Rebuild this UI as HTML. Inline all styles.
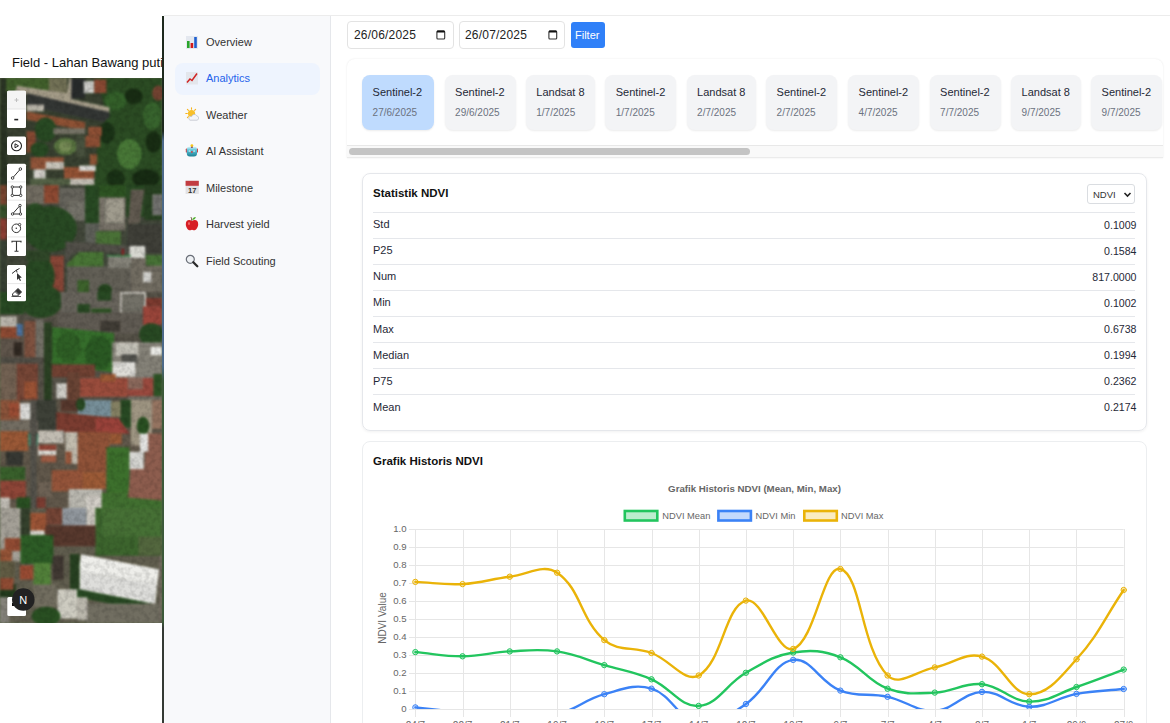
<!DOCTYPE html>
<html><head><meta charset="utf-8">
<style>
*{box-sizing:border-box;margin:0;padding:0}
html,body{width:1170px;height:723px;overflow:hidden;background:#fff;font-family:"Liberation Sans",sans-serif;position:relative}
.a{position:absolute}
.t{position:absolute;white-space:nowrap;line-height:1}
#map{left:0;top:78px;width:162px;height:545px;overflow:hidden;background:#5b6a4a}
#vline{left:162px;top:16px;width:2px;height:707px;background:linear-gradient(#1e2a1e 0,#1e2a1e 115px,#4d6a8a 125px,#4d6a8a 350px,#3d5a3a 365px,#3d5a3a 606px,#353b35 612px,#353b35 707px)}
#panel{left:164px;top:15px;width:1006px;height:708px;background:#fff;border-top:1px solid #ececec;box-shadow:0 1px 1px rgba(0,0,0,.03)}
#side{left:164px;top:16px;width:167px;height:707px;background:#f8f9fb;border-right:1px solid #e5e7eb}
.nav{font-size:11px;color:#333}
.card{position:absolute;border-radius:8px;background:#f3f4f6;box-shadow:0 1px 2px rgba(0,0,0,.08)}
.card .n{position:absolute;left:10.6px;top:12px;font-size:11px;color:#1f2937;line-height:1;white-space:nowrap}
.card .d{position:absolute;left:10.6px;top:33.3px;font-size:10px;color:#6b7280;line-height:1;white-space:nowrap}
.row{position:absolute;left:373px;width:762px;height:26px;border-top:1px solid #e5e7eb}
.row .l{position:absolute;left:0;top:6.8px;font-size:11px;color:#1f2937;line-height:1}
.row .v{position:absolute;right:-1.5px;top:7px;font-size:10.6px;color:#1f2937;line-height:1}
</style></head><body>
<div class="t" style="left:12px;top:56px;font-size:13px;color:#111">Field - Lahan Bawang putih</div>
<div id="map" class="a"><svg width="162" height="545" viewBox="0 0 162 545" style="position:absolute;left:0;top:0"><defs><filter id="bl" x="0" y="0" width="1" height="1" color-interpolation-filters="sRGB"><feGaussianBlur stdDeviation="0.9"/><feColorMatrix type="saturate" values="0.85"/><feComponentTransfer><feFuncR type="gamma" amplitude="1" exponent="1.3" offset="0"/><feFuncG type="gamma" amplitude="1" exponent="1.3" offset="0"/><feFuncB type="gamma" amplitude="1" exponent="1.3" offset="0"/></feComponentTransfer></filter><clipPath id="mc"><rect width="162" height="545"/></clipPath></defs><g filter="url(#bl)" clip-path="url(#mc)"><rect x="0.0" y="0.0" width="162.0" height="110.0" fill="#4f5a44"/><rect x="0.0" y="0.0" width="6.8" height="110.0" fill="#3f4d36"/><polygon points="97.4,0.0 162.0,0.0 162.0,110.0 94.3,110.0 97.4,68.5 106.5,38.0" fill="#3d6632"/><ellipse cx="129.3" cy="76.1" rx="12.2" ry="15.2" fill="#5a9045"/><ellipse cx="106.5" cy="54.8" rx="8.4" ry="10.6" fill="#2a4a24"/><ellipse cx="146.0" cy="100.4" rx="13.7" ry="9.1" fill="#26421f"/><ellipse cx="115.6" cy="100.4" rx="9.1" ry="9.1" fill="#2a4a22"/><ellipse cx="153.6" cy="63.9" rx="7.6" ry="10.6" fill="#27441f"/><ellipse cx="133.9" cy="18.3" rx="9.1" ry="7.6" fill="#27441f"/><ellipse cx="152.1" cy="38.0" rx="9.1" ry="13.7" fill="#4a7e3c"/><ellipse cx="115.6" cy="22.8" rx="10.6" ry="9.1" fill="#447a38"/><rect x="6.1" y="0.0" width="60.8" height="13.7" fill="#567a3a"/><rect x="48.7" y="0.0" width="18.3" height="15.2" fill="#8a886a"/><polygon points="16.7,7.6 66.9,15.2 69.2,0.0 75.3,0.0 72.3,21.3 109.5,28.9 109.5,35.7 15.2,14.5" fill="#b6ae9a"/><polygon points="26.6,15.2 109.5,34.2 109.5,39.5 103.4,44.1 26.6,28.1" fill="#4b4e4c"/><rect x="71.5" y="0.0" width="13.7" height="20.5" fill="#3e4242"/><rect x="83.7" y="3.0" width="10.6" height="12.2" fill="#d6d6d2"/><rect x="94.3" y="1.5" width="12.2" height="13.7" fill="#a65f43"/><polygon points="26.6,33.5 85.2,44.1 85.2,52.5 26.6,41.8" fill="#aa6845"/><rect x="26.6" y="26.6" width="17.5" height="6.8" fill="#c9c4b8"/><rect x="88.2" y="48.7" width="13.7" height="9.1" fill="#ac6746"/><rect x="85.2" y="57.8" width="15.2" height="11.4" fill="#a86545"/><rect x="26.6" y="53.2" width="9.1" height="21.3" fill="#a46043"/><ellipse cx="45.6" cy="51.7" rx="10.6" ry="12.2" fill="#3a6432"/><ellipse cx="39.5" cy="71.5" rx="9.1" ry="7.6" fill="#3a6432"/><ellipse cx="65.4" cy="68.5" rx="11.4" ry="8.8" fill="#6f8e52"/><ellipse cx="65.4" cy="68.5" rx="6.8" ry="5.3" fill="#8aa066"/><rect x="53.2" y="50.2" width="31.9" height="6.1" fill="#8d8a7c"/><rect x="76.1" y="57.8" width="9.1" height="21.3" fill="#5f6a52"/><rect x="30.4" y="79.1" width="33.5" height="12.2" fill="#ac6b4a"/><rect x="63.9" y="89.0" width="30.4" height="12.2" fill="#af6845"/><rect x="33.5" y="91.3" width="12.2" height="9.9" fill="#dcdad4"/><rect x="79.1" y="87.5" width="16.7" height="5.6" fill="#e0dfda"/><rect x="45.6" y="83.7" width="18.3" height="7.6" fill="#d2cfc6"/><rect x="70.0" y="100.4" width="24.3" height="9.6" fill="#cfcac0"/><rect x="30.4" y="100.4" width="39.5" height="9.6" fill="#6a7a5a"/><rect x="89.7" y="76.1" width="7.6" height="10.6" fill="#a86b46"/><ellipse cx="158.2" cy="15.2" rx="6.1" ry="7.6" fill="#935b44"/><rect x="0.0" y="107.0" width="162.0" height="110.0" fill="#5a6050"/><rect x="0.0" y="107.0" width="6.8" height="19.8" fill="#955b41"/><rect x="0.0" y="126.8" width="6.8" height="13.7" fill="#4a6a3a"/><rect x="0.0" y="140.5" width="6.8" height="21.3" fill="#aa5345"/><rect x="0.0" y="161.8" width="6.8" height="55.2" fill="#4e5a48"/><rect x="25.9" y="107.0" width="33.5" height="19.0" fill="#8a8478"/><rect x="44.1" y="107.0" width="14.5" height="18.3" fill="#aa6043"/><rect x="59.3" y="110.0" width="30.4" height="32.7" fill="#7e7c73"/><rect x="68.5" y="123.7" width="16.7" height="19.0" fill="#8c8a80"/><ellipse cx="50.2" cy="151.1" rx="26.6" ry="22.8" fill="#3a6432"/><ellipse cx="35.0" cy="137.4" rx="10.6" ry="12.2" fill="#3a6432"/><rect x="85.2" y="107.0" width="13.7" height="41.1" fill="#3a6432"/><rect x="98.9" y="107.0" width="27.4" height="12.9" fill="#3f6e30"/><rect x="126.3" y="107.0" width="18.3" height="31.9" fill="#3a6432"/><rect x="144.5" y="107.0" width="17.5" height="35.0" fill="#3a5a30"/><polygon points="130.8,111.6 144.5,111.6 139.9,145.0 127.8,146.5" fill="#7a7266"/><rect x="152.1" y="116.1" width="9.9" height="21.3" fill="#8a8a86"/><rect x="98.9" y="119.2" width="26.6" height="33.5" fill="#8f8a7e"/><rect x="105.7" y="120.7" width="18.3" height="23.6" fill="#b3aea0"/><rect x="85.2" y="145.0" width="13.7" height="19.8" fill="#767870"/><rect x="95.8" y="153.4" width="25.1" height="16.7" fill="#5e8a46"/><polygon points="65.4,163.3 130.8,167.8 130.8,175.5 106.5,173.9 91.3,172.4 71.5,175.5 65.4,186.1" fill="#6a6860"/><rect x="127.8" y="146.5" width="34.2" height="28.1" fill="#57574f"/><rect x="129.3" y="167.8" width="16.0" height="16.7" fill="#dfdfd9"/><polygon points="66.9,186.1 79.1,173.9 103.4,173.9 103.4,192.2 66.9,192.2" fill="#5c8e44"/><rect x="48.7" y="177.7" width="15.2" height="35.7" fill="#a55c49"/><ellipse cx="39.5" cy="198.3" rx="15.2" ry="19.8" fill="#3a6432"/><rect x="25.9" y="172.4" width="24.3" height="10.6" fill="#43603a"/><rect x="66.9" y="188.4" width="95.1" height="28.6" fill="#7b786e"/><rect x="108.0" y="177.7" width="22.1" height="12.2" fill="#9a988e"/><rect x="106.5" y="177.0" width="24.3" height="1.5" fill="#4a9a5a"/><rect x="77.6" y="202.1" width="11.4" height="14.9" fill="#4f7c3a"/><ellipse cx="105.0" cy="212.0" rx="6.8" ry="6.1" fill="#355e2c"/><rect x="130.8" y="180.0" width="31.2" height="37.0" fill="#8a8478"/><rect x="143.0" y="193.7" width="8.4" height="10.6" fill="#d8d8d4"/><rect x="146.0" y="177.0" width="16.0" height="10.6" fill="#5a8a45"/><rect x="121.7" y="170.9" width="2.3" height="6.1" fill="#b43535"/><rect x="0.0" y="214.0" width="162.0" height="110.0" fill="#6f6a5e"/><ellipse cx="41.1" cy="223.1" rx="21.3" ry="16.7" fill="#3a6432"/><rect x="0.0" y="214.0" width="24.3" height="22.1" fill="#3a6432"/><rect x="60.8" y="214.0" width="60.8" height="20.5" fill="#807c72"/><rect x="77.6" y="226.2" width="12.2" height="10.6" fill="#3a6432"/><rect x="91.3" y="230.7" width="19.8" height="9.1" fill="#3d6a30"/><rect x="97.4" y="214.0" width="13.7" height="8.4" fill="#3a6432"/><rect x="120.2" y="214.0" width="25.9" height="31.2" fill="#e2e0da"/><rect x="121.7" y="215.5" width="22.8" height="27.4" fill="#8a887e"/><rect x="146.0" y="220.1" width="16.0" height="8.4" fill="#9b5042"/><rect x="143.0" y="228.5" width="19.0" height="18.3" fill="#b85b4d"/><rect x="57.8" y="234.5" width="85.2" height="21.3" fill="#7a746a"/><rect x="100.4" y="242.9" width="19.8" height="10.6" fill="#5a544c"/><ellipse cx="151.4" cy="256.6" rx="12.2" ry="11.4" fill="#3a6432"/><polygon points="51.7,249.0 114.1,255.1 114.1,294.6 51.7,287.0" fill="#468838"/><ellipse cx="68.5" cy="268.8" rx="12.2" ry="15.2" fill="#3f7a32"/><ellipse cx="98.9" cy="274.8" rx="13.7" ry="16.7" fill="#3a7530"/><rect x="111.8" y="264.2" width="50.2" height="38.0" fill="#9a978d"/><rect x="115.6" y="264.2" width="22.8" height="13.7" fill="#cfcdc4"/><rect x="121.7" y="276.4" width="15.2" height="9.1" fill="#6a6a64"/><rect x="112.6" y="284.0" width="22.8" height="14.5" fill="#e6e5e0"/><rect x="150.6" y="268.8" width="11.4" height="8.4" fill="#eeeeea"/><rect x="0.0" y="238.3" width="16.7" height="10.6" fill="#c7c2b8"/><rect x="0.0" y="249.0" width="20.5" height="11.4" fill="#ab6144"/><rect x="16.7" y="245.9" width="6.1" height="12.2" fill="#5f8ab8"/><rect x="24.3" y="242.9" width="11.4" height="39.5" fill="#9a6954"/><rect x="35.7" y="241.4" width="8.4" height="42.6" fill="#8a877d"/><rect x="0.0" y="260.4" width="22.8" height="19.0" fill="#7a6e62"/><rect x="13.7" y="264.2" width="8.4" height="13.7" fill="#4a4036"/><rect x="0.0" y="279.4" width="44.1" height="6.1" fill="#6a665c"/><rect x="44.1" y="244.4" width="7.6" height="79.6" fill="#3e5a34"/><rect x="51.7" y="286.3" width="43.4" height="12.9" fill="#905946"/><rect x="79.9" y="299.9" width="47.9" height="19.0" fill="#b7624f"/><rect x="127.8" y="299.9" width="25.9" height="18.3" fill="#b75f51"/><rect x="127.8" y="299.9" width="15.2" height="11.4" fill="#a48072"/><rect x="66.9" y="293.9" width="12.9" height="30.1" fill="#855b48"/><rect x="0.0" y="285.5" width="16.7" height="38.5" fill="#8c7a68"/><rect x="16.7" y="285.5" width="21.3" height="38.5" fill="#945d4a"/><rect x="24.3" y="303.7" width="12.2" height="16.7" fill="#b76945"/><rect x="100.4" y="296.1" width="15.2" height="7.6" fill="#b77146"/><rect x="153.6" y="296.1" width="8.4" height="27.8" fill="#3f6e34"/><rect x="56.3" y="305.3" width="10.6" height="15.2" fill="#d8d6d0"/><rect x="127.8" y="318.2" width="34.2" height="5.8" fill="#8a8478"/><rect x="0.0" y="322.0" width="162.0" height="110.0" fill="#7a7060"/><rect x="0.0" y="322.0" width="19.8" height="20.5" fill="#a76b4d"/><rect x="9.1" y="325.0" width="9.9" height="13.7" fill="#b66244"/><rect x="19.8" y="325.0" width="15.2" height="16.7" fill="#e2e2de"/><rect x="35.0" y="322.0" width="21.3" height="30.4" fill="#55594e"/><rect x="77.6" y="322.0" width="34.2" height="16.7" fill="#8aa4ae"/><rect x="60.8" y="322.0" width="16.7" height="11.4" fill="#754f41"/><ellipse cx="80.6" cy="326.6" rx="4.6" ry="6.1" fill="#3a6432"/><rect x="120.2" y="322.0" width="13.7" height="27.4" fill="#3a6432"/><rect x="111.0" y="323.5" width="9.9" height="15.2" fill="#9a9676"/><rect x="130.8" y="322.0" width="21.3" height="45.6" fill="#b2a995"/><ellipse cx="143.0" cy="347.9" rx="6.1" ry="9.1" fill="#3a6a30"/><rect x="152.1" y="322.0" width="9.9" height="28.9" fill="#ac8a75"/><polygon points="56.3,334.2 118.6,340.3 129.3,355.5 56.3,353.9" fill="#9a5242"/><polygon points="95.8,340.3 118.6,340.3 129.3,355.5 95.8,355.5" fill="#b8584d"/><rect x="77.6" y="353.9" width="31.9" height="39.5" fill="#ac6949"/><rect x="82.1" y="393.5" width="24.3" height="17.5" fill="#b77146"/><rect x="109.5" y="355.5" width="12.2" height="10.6" fill="#b77146"/><rect x="65.4" y="353.9" width="12.2" height="31.9" fill="#cfc9bc"/><rect x="65.4" y="373.7" width="6.1" height="12.2" fill="#b06b4b"/><rect x="0.0" y="342.5" width="38.0" height="10.6" fill="#8b8478"/><rect x="0.0" y="353.2" width="28.1" height="19.8" fill="#b66f46"/><rect x="28.1" y="355.5" width="9.9" height="12.2" fill="#5aa080"/><rect x="38.0" y="352.4" width="25.9" height="12.9" fill="#cec9bf"/><rect x="38.0" y="366.9" width="18.3" height="10.6" fill="#e4e1da"/><rect x="38.8" y="366.9" width="17.5" height="5.3" fill="#af5c4a"/><rect x="41.1" y="377.5" width="15.2" height="6.8" fill="#b87155"/><rect x="6.1" y="373.7" width="16.7" height="13.7" fill="#4e4f48"/><rect x="0.0" y="388.9" width="25.1" height="13.7" fill="#4b7a3a"/><rect x="0.0" y="402.6" width="25.9" height="18.3" fill="#ac5c4a"/><rect x="0.0" y="419.4" width="9.9" height="12.6" fill="#d0ccc4"/><rect x="16.7" y="419.4" width="15.2" height="12.6" fill="#3a6a30"/><rect x="38.0" y="404.1" width="13.7" height="15.2" fill="#857a6a"/><rect x="51.7" y="392.0" width="31.2" height="21.3" fill="#b06b4b"/><rect x="68.5" y="411.0" width="33.5" height="21.0" fill="#c8c6be"/><rect x="35.0" y="419.4" width="10.6" height="12.6" fill="#985244"/><rect x="106.5" y="369.2" width="22.8" height="62.8" fill="#4e8a3a"/><rect x="101.9" y="414.8" width="60.1" height="17.2" fill="#558a3e"/><polygon points="130.8,355.5 162.0,355.5 162.0,422.4 127.8,419.4 130.8,390.5 144.5,390.5 146.0,355.5" fill="#a87563"/><rect x="129.3" y="373.7" width="14.5" height="17.5" fill="#dfdfdb"/><rect x="139.9" y="355.5" width="8.4" height="18.3" fill="#ececea"/><rect x="30.4" y="322.0" width="6.1" height="110.0" fill="#6c6a62"/><rect x="85.9" y="419.4" width="15.1" height="12.6" fill="#dcd9d2"/><rect x="0.0" y="430.0" width="162.0" height="115.1" fill="#7a7664"/><rect x="0.0" y="430.0" width="20.7" height="53.3" fill="#b6b2a8"/><rect x="4.8" y="460.2" width="15.9" height="12.7" fill="#af6244"/><rect x="0.0" y="471.4" width="11.9" height="11.9" fill="#b26b48"/><rect x="20.7" y="430.0" width="9.5" height="27.1" fill="#4a5a40"/><rect x="30.2" y="434.8" width="17.5" height="19.1" fill="#b76b46"/><rect x="30.2" y="452.3" width="14.3" height="7.2" fill="#e0ddd6"/><rect x="46.1" y="430.0" width="15.9" height="16.7" fill="#925b49"/><rect x="62.1" y="430.0" width="24.7" height="21.5" fill="#a4aab0"/><rect x="86.7" y="430.0" width="14.3" height="22.3" fill="#d8d4cc"/><rect x="45.4" y="447.5" width="51.7" height="20.7" fill="#754f41"/><rect x="20.7" y="457.1" width="32.6" height="28.6" fill="#3e7834"/><rect x="33.4" y="484.9" width="17.5" height="22.3" fill="#669a48"/><rect x="19.9" y="487.3" width="13.5" height="14.3" fill="#b66244"/><rect x="95.5" y="430.0" width="66.5" height="47.7" fill="#4f7f3c"/><rect x="101.8" y="430.0" width="60.2" height="28.6" fill="#5a8a45"/><rect x="138.4" y="458.6" width="23.6" height="19.1" fill="#6a8050"/><polygon points="81.2,476.1 159.1,491.3 155.2,526.3 74.8,510.4" fill="#f2f2ee"/><polygon points="79.6,492.9 157.5,504.8 155.2,526.3 74.8,510.4" fill="#e6e6e2"/><polygon points="74.8,510.4 155.2,526.3 151.2,533.4 76.4,519.1" fill="#3a6432"/><rect x="85.9" y="525.5" width="76.1" height="19.6" fill="#8a8678"/><rect x="70.0" y="476.1" width="9.5" height="35.0" fill="#3a5a30"/><rect x="57.3" y="511.2" width="19.9" height="29.4" fill="#d8d6cc"/><rect x="77.2" y="519.1" width="10.3" height="23.1" fill="#c8c5bb"/><ellipse cx="46.1" cy="538.2" rx="14.3" ry="9.5" fill="#3a6a30"/><rect x="0.0" y="506.4" width="15.9" height="12.7" fill="#35552c"/><rect x="33.4" y="506.4" width="23.9" height="22.3" fill="#8a8576"/><rect x="0.0" y="519.1" width="9.5" height="25.9" fill="#9a9890"/><rect x="0.0" y="483.3" width="14.3" height="19.9" fill="#7a7458"/><rect x="0.0" y="500.0" width="13.5" height="11.9" fill="#ac6245"/><rect x="52.5" y="477.7" width="11.1" height="23.9" fill="#5a5048"/><rect x="159.1" y="477.7" width="2.9" height="67.3" fill="#8a8276"/></g><filter id="nz" x="0" y="0" width="1" height="1"><feTurbulence type="fractalNoise" baseFrequency="0.2" numOctaves="2" seed="3"/><feColorMatrix type="matrix" values="0 0 0 0 0  0 0 0 0 0  0 0 0 0 0  0 0 0 -1.6 1.0"/></filter><rect width="162" height="545" filter="url(#nz)" opacity="0.18"/></svg></div>
<div id="vline" class="a"></div>
<div id="panel" class="a"></div>
<div id="side" class="a"></div>
<div class="a" style="left:175px;top:63px;width:145px;height:32px;border-radius:8px;background:#eef4fe"></div>
<div class="t nav" style="left:206px;top:37px">Overview</div>
<div class="t nav" style="left:206px;top:73px;color:#2563eb">Analytics</div>
<div class="t nav" style="left:206px;top:110px">Weather</div>
<div class="t nav" style="left:206px;top:146px">AI Assistant</div>
<div class="t nav" style="left:206px;top:183px">Milestone</div>
<div class="t nav" style="left:206px;top:219px">Harvest yield</div>
<div class="t nav" style="left:206px;top:256px">Field Scouting</div>

<!-- date filter -->
<div class="a" style="left:347px;top:21px;width:107px;height:28px;border:1px solid #e3e3e3;border-radius:4px"></div>
<div class="t" style="left:354px;top:29px;font-size:12px;letter-spacing:0.2px;color:#222">26/06/2025</div>
<div class="a" style="left:458.5px;top:21px;width:106.5px;height:28px;border:1px solid #e3e3e3;border-radius:4px"></div>
<div class="t" style="left:465px;top:29px;font-size:12px;letter-spacing:0.2px;color:#222">26/07/2025</div>
<div class="a" style="left:571px;top:22px;width:34px;height:26px;border-radius:3px;background:#2f80f8"></div>
<div class="t" style="left:575px;top:30px;font-size:11px;color:#fff">Filter</div>

<!-- carousel -->
<div class="a" style="left:347px;top:59px;width:816px;height:99px;background:#fff;border-radius:8px 8px 0 0;box-shadow:0 0 2px rgba(0,0,0,.10)"></div>
<div class="a" style="left:347px;top:145px;width:816px;height:13px;background:#f9f9f9;border-top:1px solid #e8e8e8;border-bottom:1px solid #ebebeb"></div>
<div class="a" style="left:349px;top:148px;width:401px;height:7px;background:#c4c4c4;border-radius:4px"></div>

<!-- stats card -->
<div class="a" style="left:362px;top:173px;width:785px;height:257.5px;border:1px solid #e5e7eb;border-radius:8px;box-shadow:0 1px 3px rgba(0,0,0,.06)"></div>
<div class="t" style="left:373px;top:188px;font-size:11.5px;font-weight:700;color:#111">Statistik NDVI</div>

<!-- chart card -->
<div class="a" style="left:362px;top:441px;width:785px;height:300px;border:1px solid #eceef0;border-radius:8px"></div>
<div class="t" style="left:373px;top:456px;font-size:11.5px;font-weight:700;color:#111">Grafik Historis NDVI</div>
<div class="card" style="left:362.0px;top:75px;width:72.0px;height:55px;background:#bfdbfe;"><div class="n">Sentinel-2</div><div class="d">27/6/2025</div></div>
<div class="card" style="left:444.5px;top:75px;width:71.0px;height:55px;"><div class="n">Sentinel-2</div><div class="d">29/6/2025</div></div>
<div class="card" style="left:525.7px;top:75px;width:69.0px;height:55px;"><div class="n">Landsat 8</div><div class="d">1/7/2025</div></div>
<div class="card" style="left:605.2px;top:75px;width:71.0px;height:55px;"><div class="n">Sentinel-2</div><div class="d">1/7/2025</div></div>
<div class="card" style="left:686.5px;top:75px;width:69.5px;height:55px;"><div class="n">Landsat 8</div><div class="d">2/7/2025</div></div>
<div class="card" style="left:766.0px;top:75px;width:71.0px;height:55px;"><div class="n">Sentinel-2</div><div class="d">2/7/2025</div></div>
<div class="card" style="left:848.0px;top:75px;width:71.0px;height:55px;"><div class="n">Sentinel-2</div><div class="d">4/7/2025</div></div>
<div class="card" style="left:929.5px;top:75px;width:71.0px;height:55px;"><div class="n">Sentinel-2</div><div class="d">7/7/2025</div></div>
<div class="card" style="left:1011.0px;top:75px;width:70.0px;height:55px;"><div class="n">Landsat 8</div><div class="d">9/7/2025</div></div>
<div class="card" style="left:1091.0px;top:75px;width:71.0px;height:55px;"><div class="n">Sentinel-2</div><div class="d">9/7/2025</div></div>
<div class="row" style="top:211.5px"><div class="l">Std</div><div class="v">0.1009</div></div>
<div class="row" style="top:237.6px"><div class="l">P25</div><div class="v">0.1584</div></div>
<div class="row" style="top:263.6px"><div class="l">Num</div><div class="v">817.0000</div></div>
<div class="row" style="top:289.7px"><div class="l">Min</div><div class="v">0.1002</div></div>
<div class="row" style="top:315.8px"><div class="l">Max</div><div class="v">0.6738</div></div>
<div class="row" style="top:341.9px"><div class="l">Median</div><div class="v">0.1994</div></div>
<div class="row" style="top:367.9px"><div class="l">P75</div><div class="v">0.2362</div></div>
<div class="row" style="top:394.0px"><div class="l">Mean</div><div class="v">0.2174</div></div>
<div class="a" style="left:1087px;top:184px;width:48px;height:19.8px;border:1px solid #dadde1;border-radius:3px"></div>
<div class="t" style="left:1093px;top:189.5px;font-size:9.5px;color:#333">NDVI</div>
<svg class="a" style="left:1123px;top:190.5px" width="9" height="7"><path d="M1.5 2 L4.5 5 L7.5 2" stroke="#222" stroke-width="1.6" fill="none"/></svg>
<svg class="a" style="left:0;top:0" width="40" height="623"><rect x="7.0" y="90.8" width="19.0" height="37.2" rx="1.5" fill="#fff"/><rect x="7" y="90.8" width="19" height="18.2" rx="1.5" fill="#f4f4f4"/><path d="M7 109H26" stroke="#e4e4e4" stroke-width="1"/><path d="M14.5 100H18.5M16.5 98V102" stroke="#bbb" stroke-width="0.9"/><path d="M14.3 119.6H18.2" stroke="#222" stroke-width="1.6"/><rect x="7.0" y="136.5" width="19.0" height="18.5" rx="1.5" fill="#fff"/><circle cx="16.5" cy="145.8" r="5" fill="none" stroke="#222" stroke-width="1.1"/><path d="M15 143.8 L18.5 145.8 L15 147.8Z" fill="none" stroke="#222" stroke-width="1"/><rect x="7.0" y="163.7" width="19.0" height="92.3" rx="1.5" fill="#fff"/><path d="M7.5 181.9H25.5" stroke="#e0e0e0" stroke-width="0.8"/><path d="M7.5 200.2H25.5" stroke="#e0e0e0" stroke-width="0.8"/><path d="M7.5 218.5H25.5" stroke="#e0e0e0" stroke-width="0.8"/><path d="M7.5 236.9H25.5" stroke="#e0e0e0" stroke-width="0.8"/><path d="M13 177.5 L20 169.5" stroke="#333" stroke-width="1"/><circle cx="12.6" cy="178" r="1.3" fill="#fff" stroke="#333" stroke-width="0.9"/><circle cx="20.4" cy="169" r="1.3" fill="#fff" stroke="#333" stroke-width="0.9"/><rect x="12.3" y="187" width="8.4" height="8.4" fill="none" stroke="#333" stroke-width="1"/><circle cx="12.3" cy="187.0" r="1.2" fill="#fff" stroke="#333" stroke-width="0.9"/><circle cx="20.7" cy="187.0" r="1.2" fill="#fff" stroke="#333" stroke-width="0.9"/><circle cx="12.3" cy="195.4" r="1.2" fill="#fff" stroke="#333" stroke-width="0.9"/><circle cx="20.7" cy="195.4" r="1.2" fill="#fff" stroke="#333" stroke-width="0.9"/><path d="M12.5 214 L20.5 214 L20 205.5Z" fill="none" stroke="#333" stroke-width="1"/><circle cx="12.5" cy="214.0" r="1.2" fill="#fff" stroke="#333" stroke-width="0.9"/><circle cx="20.5" cy="214.0" r="1.2" fill="#fff" stroke="#333" stroke-width="0.9"/><circle cx="20.0" cy="205.5" r="1.2" fill="#fff" stroke="#333" stroke-width="0.9"/><circle cx="16.3" cy="228.3" r="4.3" fill="none" stroke="#333" stroke-width="1"/><circle cx="16.3" cy="228.3" r="0.8" fill="#333"/><circle cx="19.6" cy="224.6" r="1.2" fill="#fff" stroke="#333" stroke-width="0.9"/><path d="M12 242.5V241.3H21V242.5M16.5 241.3V251.3M14.5 251.3H18.5" fill="none" stroke="#333" stroke-width="1.1"/><rect x="7.0" y="265.0" width="19.0" height="36.3" rx="1.5" fill="#fff"/><path d="M7.5 283.6H25.5" stroke="#e0e0e0" stroke-width="0.8"/><path d="M12 273.5 L16.5 270 L19.5 268.5 M16.5 270 L17 272.5" stroke="#333" stroke-width="1" fill="none"/><path d="M17 273 L17 280 L18.6 278.4 L20 281 L21 280.4 L19.7 277.9 L21.8 277.6Z" fill="#333"/><path d="M12.5 294 L18 288.5 L21.5 292 L17.5 296 H12.8 Z M15 291.5 L18.7 295" fill="none" stroke="#333" stroke-width="1"/><path d="M18 288.5 L21.5 292 L19 294.5 L15.5 291Z" fill="#333"/><path d="M11.5 296.5H21" stroke="#333" stroke-width="0.8"/><rect x="7.3" y="597.0" width="18.7" height="19.0" rx="1.5" fill="#fff"/><rect x="12" y="603" width="3" height="3" fill="#111"/><circle cx="23.3" cy="599.5" r="11.3" fill="#222"/><text x="23.3" y="603.8" text-anchor="middle" font-family="Liberation Sans" font-size="11" fill="#fff">N</text></svg>
<svg class="a" style="left:185.0px;top:34.5px" width="14" height="14" viewBox="0 0 14 14"><rect x="1" y="1" width="12" height="13" fill="#e4e8ef"/><rect x="2" y="6" width="2.6" height="7" fill="#2aa52a"/><rect x="5.6" y="8" width="2.6" height="5" fill="#d11a1a"/><rect x="9.2" y="2" width="2.6" height="11" fill="#1f5fcf"/></svg>
<svg class="a" style="left:185.0px;top:70.5px" width="14" height="14" viewBox="0 0 14 14"><rect x="1" y="1" width="12" height="12.5" fill="#e3e6ec"/><path d="M2 11.5 L5 8 L7 9.5 L12 2.5" stroke="#d02424" stroke-width="1.5" fill="none"/></svg>
<svg class="a" style="left:185.0px;top:106.5px" width="14" height="14" viewBox="0 0 14 14"><g stroke="#f6b21a" stroke-width="1.1" stroke-linecap="round"><path d="M6.5 0.8V2.3M0.8 6.5H2.3M2.4 2.4L3.4 3.4M10.6 2.4L9.6 3.4M2.4 10.6L3.4 9.6"/></g><circle cx="6.5" cy="6.5" r="3.6" fill="#f8c02a"/><path d="M5 13.2 H12 A2.2 2.2 0 0 0 11.8 8.9 A2.8 2.8 0 0 0 6.6 9.6 A1.8 1.8 0 0 0 5 13.2Z" fill="#f4f5f8" stroke="#b9bec8" stroke-width="0.7"/></svg>
<svg class="a" style="left:185.0px;top:143.5px" width="14" height="14" viewBox="0 0 14 14"><defs><linearGradient id="rg" x1="0" y1="0" x2="0" y2="1"><stop offset="0" stop-color="#e4f6f6"/><stop offset="0.35" stop-color="#5cc6dc"/><stop offset="1" stop-color="#1d7f92"/></linearGradient></defs><rect x="0.8" y="4.6" width="1.6" height="4" rx="0.7" fill="#c8454a"/><rect x="11.4" y="4.6" width="1.6" height="4" rx="0.7" fill="#c8454a"/><rect x="1.8" y="2.5" width="10.2" height="10" rx="3" fill="url(#rg)"/><circle cx="6.9" cy="3" r="1.1" fill="#7a3f7a"/><circle cx="6.9" cy="1.6" r="1.4" fill="#f5c518"/><ellipse cx="4.6" cy="7" rx="1.1" ry="0.6" fill="#fff"/><ellipse cx="9.2" cy="7" rx="1.1" ry="0.6" fill="#fff"/><circle cx="6.9" cy="8" r="0.9" fill="#d04040"/></svg>
<svg class="a" style="left:184.5px;top:180.0px" width="15" height="15" viewBox="0 0 15 15"><rect x="0.6" y="0.8" width="13.2" height="13.2" fill="#e2e2e4"/><rect x="0.6" y="0.8" width="13.2" height="5" fill="#c23c40"/><text x="7.2" y="12.8" text-anchor="middle" font-family="Liberation Sans" font-weight="700" font-size="7.5" fill="#333">17</text></svg>
<svg class="a" style="left:185.0px;top:215.8px" width="15" height="15" viewBox="0 0 15 15"><path d="M7 5 C4 3 0.6 4.3 0.8 8.4 C1 12 3.6 14.6 5.5 14.2 C6.2 14 6.5 13.8 7 13.8 C7.5 13.8 7.8 14 8.5 14.2 C10.4 14.6 13 12 13.2 8.4 C13.4 4.3 10 3 7 5Z" fill="#d71f26"/><path d="M6.8 4.8 C6.8 3.2 6.6 2 6 1.2" stroke="#5a3a1a" stroke-width="0.9" fill="none"/><path d="M7.2 4 C7.6 2 9.5 0.8 10.8 1 C10.5 2.8 9 4 7.2 4Z" fill="#4caf2a"/><ellipse cx="4" cy="7.6" rx="1" ry="1.5" fill="#f06a6a"/></svg>
<svg class="a" style="left:185.0px;top:253.5px" width="14" height="14" viewBox="0 0 14 14"><circle cx="5.3" cy="5.3" r="4" fill="#eef1f4" stroke="#6a6f78" stroke-width="1.2"/><path d="M8.3 8.3 L12.3 12.3" stroke="#2a2a2a" stroke-width="2.3" stroke-linecap="round"/></svg>
<svg class="a" style="left:435.5px;top:29px" width="10" height="11"><rect x="0.9" y="2" width="7.8" height="8" rx="1" fill="none" stroke="#333" stroke-width="1.1"/><rect x="0.9" y="1.6" width="7.8" height="2" rx="0.6" fill="#111"/></svg>
<svg class="a" style="left:547.5px;top:29px" width="10" height="11"><rect x="0.9" y="2" width="7.8" height="8" rx="1" fill="none" stroke="#333" stroke-width="1.1"/><rect x="0.9" y="1.6" width="7.8" height="2" rx="0.6" fill="#111"/></svg>
<svg class="a" style="left:0;top:0" width="1170" height="723" viewBox="0 0 1170 723">
<defs><clipPath id="pc"><rect x="411.4" y="525.0" width="716.3" height="184.0"/></clipPath></defs>
<path d="M409 709.5 H1123.7 M409 691.5 H1123.7 M409 673.5 H1123.7 M409 655.5 H1123.7 M409 637.5 H1123.7 M409 619.5 H1123.7 M409 601.5 H1123.7 M409 583.5 H1123.7 M409 565.5 H1123.7 M409 547.5 H1123.7 M409 529.5 H1123.7 M415.5 529.0 V717 M463.5 529.0 V717 M510.5 529.0 V717 M557.5 529.0 V717 M604.5 529.0 V717 M652.5 529.0 V717 M699.5 529.0 V717 M746.5 529.0 V717 M793.5 529.0 V717 M840.5 529.0 V717 M888.5 529.0 V717 M935.5 529.0 V717 M982.5 529.0 V717 M1029.5 529.0 V717 M1076.5 529.0 V717 M1124.5 529.0 V717" stroke="#e6e6e6" stroke-width="1" fill="none"/>
<g clip-path="url(#pc)" fill="none" stroke-width="2.4" stroke-linecap="round" stroke-linejoin="round">
<path d="M415.4 652.1 C434.3 653.8 443.7 656.4 462.6 656.3 C481.5 656.1 490.9 652.4 509.8 651.4 C528.7 650.4 538.6 648.7 557.1 651.4 C576.3 654.2 585.4 659.5 604.3 665.1 C623.2 670.7 633.5 671.5 651.5 679.3 C671.3 687.9 680.4 707.2 698.7 705.9 C718.2 704.6 726.0 684.1 745.9 672.8 C763.7 662.7 773.5 655.7 793.2 652.5 C811.3 649.5 823.2 650.7 840.4 657.3 C860.9 665.2 867.0 681.0 887.6 688.7 C904.8 695.1 916.0 693.5 934.8 692.6 C953.8 691.7 963.6 682.4 982.0 684.2 C1001.4 686.0 1010.2 701.0 1029.3 701.6 C1048.0 702.2 1057.8 693.4 1076.5 687.0 C1095.5 680.6 1104.8 676.6 1123.7 669.6" stroke="#22c55e"/>
<path d="M415.4 707.4 C434.3 709.5 443.7 710.5 462.6 712.6 C481.5 714.7 490.9 717.6 509.8 718.0 C528.7 718.4 538.9 719.0 557.1 714.4 C576.7 709.5 584.7 699.6 604.3 694.2 C622.4 689.3 634.6 683.4 651.5 688.7 C672.4 695.1 678.5 720.1 698.7 723.4 C716.3 726.2 729.3 715.2 745.9 704.0 C767.0 689.8 773.0 662.7 793.2 659.9 C810.8 657.4 819.9 682.6 840.4 690.6 C857.7 697.4 869.0 692.8 887.6 696.8 C906.8 700.9 916.2 711.8 934.8 710.8 C954.0 709.8 962.9 692.7 982.0 691.9 C1000.7 691.1 1010.3 706.4 1029.3 706.8 C1048.0 707.2 1057.3 697.5 1076.5 693.9 C1095.1 690.4 1104.8 691.0 1123.7 689.0" stroke="#3b82f6"/>
<path d="M415.4 581.9 C434.3 582.8 443.8 585.1 462.6 584.1 C481.6 583.0 490.9 579.0 509.8 576.7 C528.6 574.4 543.2 563.5 557.1 572.7 C581.0 588.8 580.6 619.9 604.3 640.1 C618.4 652.0 633.2 646.2 651.5 653.0 C671.0 660.3 684.7 683.3 698.7 675.5 C722.5 662.3 724.5 606.7 745.9 600.6 C762.3 596.0 777.3 654.2 793.2 648.9 C815.0 641.5 823.6 564.2 840.4 569.0 C861.4 574.9 860.8 647.6 887.6 675.5 C898.6 687.0 916.0 671.2 934.8 667.4 C953.8 663.6 965.2 651.8 982.0 656.6 C1003.0 662.6 1010.1 693.7 1029.3 694.2 C1047.9 694.8 1060.9 676.5 1076.5 659.3 C1098.7 634.8 1104.8 617.7 1123.7 590.0" stroke="#eab308"/>
<circle cx="415.4" cy="652.1" r="2.7" fill="rgba(34,197,94,.25)" stroke="#22c55e" stroke-width="1"/>
<circle cx="462.6" cy="656.3" r="2.7" fill="rgba(34,197,94,.25)" stroke="#22c55e" stroke-width="1"/>
<circle cx="509.8" cy="651.4" r="2.7" fill="rgba(34,197,94,.25)" stroke="#22c55e" stroke-width="1"/>
<circle cx="557.1" cy="651.4" r="2.7" fill="rgba(34,197,94,.25)" stroke="#22c55e" stroke-width="1"/>
<circle cx="604.3" cy="665.1" r="2.7" fill="rgba(34,197,94,.25)" stroke="#22c55e" stroke-width="1"/>
<circle cx="651.5" cy="679.3" r="2.7" fill="rgba(34,197,94,.25)" stroke="#22c55e" stroke-width="1"/>
<circle cx="698.7" cy="705.9" r="2.7" fill="rgba(34,197,94,.25)" stroke="#22c55e" stroke-width="1"/>
<circle cx="745.9" cy="672.8" r="2.7" fill="rgba(34,197,94,.25)" stroke="#22c55e" stroke-width="1"/>
<circle cx="793.2" cy="652.5" r="2.7" fill="rgba(34,197,94,.25)" stroke="#22c55e" stroke-width="1"/>
<circle cx="840.4" cy="657.3" r="2.7" fill="rgba(34,197,94,.25)" stroke="#22c55e" stroke-width="1"/>
<circle cx="887.6" cy="688.7" r="2.7" fill="rgba(34,197,94,.25)" stroke="#22c55e" stroke-width="1"/>
<circle cx="934.8" cy="692.6" r="2.7" fill="rgba(34,197,94,.25)" stroke="#22c55e" stroke-width="1"/>
<circle cx="982.0" cy="684.2" r="2.7" fill="rgba(34,197,94,.25)" stroke="#22c55e" stroke-width="1"/>
<circle cx="1029.3" cy="701.6" r="2.7" fill="rgba(34,197,94,.25)" stroke="#22c55e" stroke-width="1"/>
<circle cx="1076.5" cy="687.0" r="2.7" fill="rgba(34,197,94,.25)" stroke="#22c55e" stroke-width="1"/>
<circle cx="1123.7" cy="669.6" r="2.7" fill="rgba(34,197,94,.25)" stroke="#22c55e" stroke-width="1"/>
<circle cx="415.4" cy="707.4" r="2.7" fill="rgba(59,130,246,.25)" stroke="#3b82f6" stroke-width="1"/>
<circle cx="604.3" cy="694.2" r="2.7" fill="rgba(59,130,246,.25)" stroke="#3b82f6" stroke-width="1"/>
<circle cx="651.5" cy="688.7" r="2.7" fill="rgba(59,130,246,.25)" stroke="#3b82f6" stroke-width="1"/>
<circle cx="745.9" cy="704.0" r="2.7" fill="rgba(59,130,246,.25)" stroke="#3b82f6" stroke-width="1"/>
<circle cx="793.2" cy="659.9" r="2.7" fill="rgba(59,130,246,.25)" stroke="#3b82f6" stroke-width="1"/>
<circle cx="840.4" cy="690.6" r="2.7" fill="rgba(59,130,246,.25)" stroke="#3b82f6" stroke-width="1"/>
<circle cx="887.6" cy="696.8" r="2.7" fill="rgba(59,130,246,.25)" stroke="#3b82f6" stroke-width="1"/>
<circle cx="982.0" cy="691.9" r="2.7" fill="rgba(59,130,246,.25)" stroke="#3b82f6" stroke-width="1"/>
<circle cx="1029.3" cy="706.8" r="2.7" fill="rgba(59,130,246,.25)" stroke="#3b82f6" stroke-width="1"/>
<circle cx="1076.5" cy="693.9" r="2.7" fill="rgba(59,130,246,.25)" stroke="#3b82f6" stroke-width="1"/>
<circle cx="1123.7" cy="689.0" r="2.7" fill="rgba(59,130,246,.25)" stroke="#3b82f6" stroke-width="1"/>
<circle cx="415.4" cy="581.9" r="2.7" fill="rgba(234,179,8,.25)" stroke="#eab308" stroke-width="1"/>
<circle cx="462.6" cy="584.1" r="2.7" fill="rgba(234,179,8,.25)" stroke="#eab308" stroke-width="1"/>
<circle cx="509.8" cy="576.7" r="2.7" fill="rgba(234,179,8,.25)" stroke="#eab308" stroke-width="1"/>
<circle cx="557.1" cy="572.7" r="2.7" fill="rgba(234,179,8,.25)" stroke="#eab308" stroke-width="1"/>
<circle cx="604.3" cy="640.1" r="2.7" fill="rgba(234,179,8,.25)" stroke="#eab308" stroke-width="1"/>
<circle cx="651.5" cy="653.0" r="2.7" fill="rgba(234,179,8,.25)" stroke="#eab308" stroke-width="1"/>
<circle cx="698.7" cy="675.5" r="2.7" fill="rgba(234,179,8,.25)" stroke="#eab308" stroke-width="1"/>
<circle cx="745.9" cy="600.6" r="2.7" fill="rgba(234,179,8,.25)" stroke="#eab308" stroke-width="1"/>
<circle cx="793.2" cy="648.9" r="2.7" fill="rgba(234,179,8,.25)" stroke="#eab308" stroke-width="1"/>
<circle cx="840.4" cy="569.0" r="2.7" fill="rgba(234,179,8,.25)" stroke="#eab308" stroke-width="1"/>
<circle cx="887.6" cy="675.5" r="2.7" fill="rgba(234,179,8,.25)" stroke="#eab308" stroke-width="1"/>
<circle cx="934.8" cy="667.4" r="2.7" fill="rgba(234,179,8,.25)" stroke="#eab308" stroke-width="1"/>
<circle cx="982.0" cy="656.6" r="2.7" fill="rgba(234,179,8,.25)" stroke="#eab308" stroke-width="1"/>
<circle cx="1029.3" cy="694.2" r="2.7" fill="rgba(234,179,8,.25)" stroke="#eab308" stroke-width="1"/>
<circle cx="1076.5" cy="659.3" r="2.7" fill="rgba(234,179,8,.25)" stroke="#eab308" stroke-width="1"/>
<circle cx="1123.7" cy="590.0" r="2.7" fill="rgba(234,179,8,.25)" stroke="#eab308" stroke-width="1"/>
</g>
<g font-family="Liberation Sans" font-size="10" fill="#666"><text x="406.5" y="712.4" text-anchor="end" font-size="9.6">0</text><text x="406.5" y="694.4" text-anchor="end" font-size="9.6">0.1</text><text x="406.5" y="676.4" text-anchor="end" font-size="9.6">0.2</text><text x="406.5" y="658.4" text-anchor="end" font-size="9.6">0.3</text><text x="406.5" y="640.4" text-anchor="end" font-size="9.6">0.4</text><text x="406.5" y="622.4" text-anchor="end" font-size="9.6">0.5</text><text x="406.5" y="604.4" text-anchor="end" font-size="9.6">0.6</text><text x="406.5" y="586.4" text-anchor="end" font-size="9.6">0.7</text><text x="406.5" y="568.4" text-anchor="end" font-size="9.6">0.8</text><text x="406.5" y="550.4" text-anchor="end" font-size="9.6">0.9</text><text x="406.5" y="532.4" text-anchor="end" font-size="9.6">1.0</text><text x="415.4" y="729" text-anchor="middle">24/7</text><text x="462.6" y="729" text-anchor="middle">22/7</text><text x="509.8" y="729" text-anchor="middle">21/7</text><text x="557.1" y="729" text-anchor="middle">19/7</text><text x="604.3" y="729" text-anchor="middle">18/7</text><text x="651.5" y="729" text-anchor="middle">17/7</text><text x="698.7" y="729" text-anchor="middle">14/7</text><text x="745.9" y="729" text-anchor="middle">12/7</text><text x="793.2" y="729" text-anchor="middle">10/7</text><text x="840.4" y="729" text-anchor="middle">9/7</text><text x="887.6" y="729" text-anchor="middle">7/7</text><text x="934.8" y="729" text-anchor="middle">4/7</text><text x="982.0" y="729" text-anchor="middle">2/7</text><text x="1029.3" y="729" text-anchor="middle">1/7</text><text x="1076.5" y="729" text-anchor="middle">29/6</text><text x="1123.7" y="729" text-anchor="middle">27/6</text></g>
<text x="0" y="0" transform="translate(385.5 618) rotate(-90)" text-anchor="middle" font-family="Liberation Sans" font-size="10" fill="#666">NDVI Value</text>
<text x="754.5" y="491.8" text-anchor="middle" font-family="Liberation Sans" font-weight="700" font-size="9.7" fill="#666">Grafik Historis NDVI (Mean, Min, Max)</text>
<rect x="624.8" y="511" width="32.5" height="9.5" fill="rgba(34,197,94,.3)" stroke="#22c55e" stroke-width="2.6"/>
<text x="662.3" y="518.6" font-family="Liberation Sans" font-size="9.3" fill="#666">NDVI Mean</text>
<rect x="718.4" y="511" width="32.5" height="9.5" fill="rgba(59,130,246,.3)" stroke="#3b82f6" stroke-width="2.6"/>
<text x="755.6" y="518.6" font-family="Liberation Sans" font-size="9.3" fill="#666">NDVI Min</text>
<rect x="804.3" y="511" width="32.5" height="9.5" fill="rgba(234,179,8,.25)" stroke="#eab308" stroke-width="2.6"/>
<text x="841.0" y="518.6" font-family="Liberation Sans" font-size="9.3" fill="#666">NDVI Max</text>
</svg>
</body></html>
